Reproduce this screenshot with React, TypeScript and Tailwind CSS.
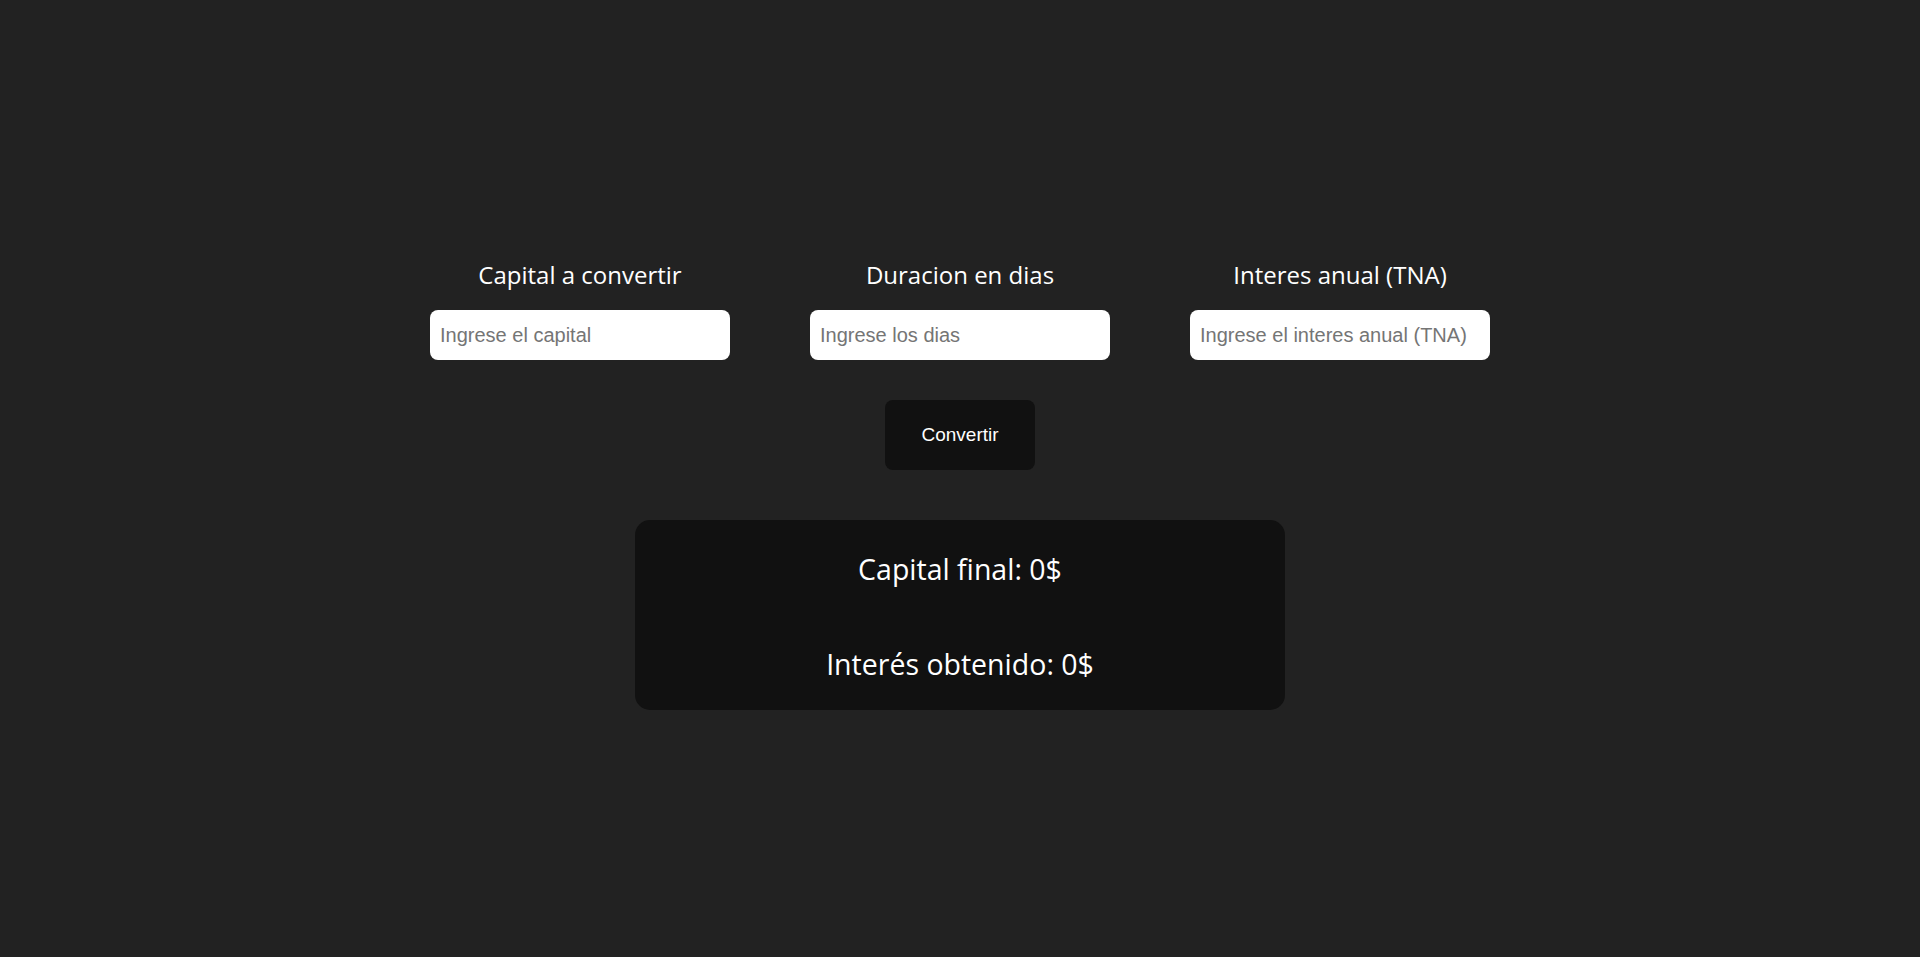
import React from "react";

const fields = [
  { label: "Capital a convertir", placeholder: "Ingrese el capital" },
  { label: "Duracion en dias", placeholder: "Ingrese los dias" },
  { label: "Interes anual (TNA)", placeholder: "Ingrese el interes anual (TNA)" },
];

export default function App() {
  return (
    <div
      className="min-h-screen w-full bg-[#222222] flex flex-col items-center pt-[259px] text-white"
      style={{ fontFamily: '"Segoe UI", "Open Sans", "Noto Sans", sans-serif' }}
    >
      <div className="flex gap-[80px]">
        {fields.map((f) => (
          <div key={f.label} className="flex flex-col items-center w-[300px]">
            <label className="text-[24px] leading-[32px] text-white">{f.label}</label>
            <input
              type="text"
              placeholder={f.placeholder}
              className="mt-[19px] w-[300px] h-[50px] rounded-[8px] bg-white px-[10px] text-[20px] text-black outline-none placeholder:text-[#757575] font-['Liberation_Sans',Arial,sans-serif]"
            />
          </div>
        ))}
      </div>
      <button className="mt-[40px] w-[150px] h-[70px] rounded-[8px] bg-[#111111] text-white text-[19px] font-['Liberation_Sans',Arial,sans-serif]">
        Convertir
      </button>
      <div className="mt-[50px] w-[650px] h-[190px] rounded-[15px] bg-[#111111] flex flex-col items-center pt-[29px] gap-[55px]">
        <p className="text-[28.5px] leading-[40px] text-white">Capital final: 0$</p>
        <p className="text-[28.5px] leading-[40px] text-white">Interés obtenido: 0$</p>
      </div>
    </div>
  );
}
